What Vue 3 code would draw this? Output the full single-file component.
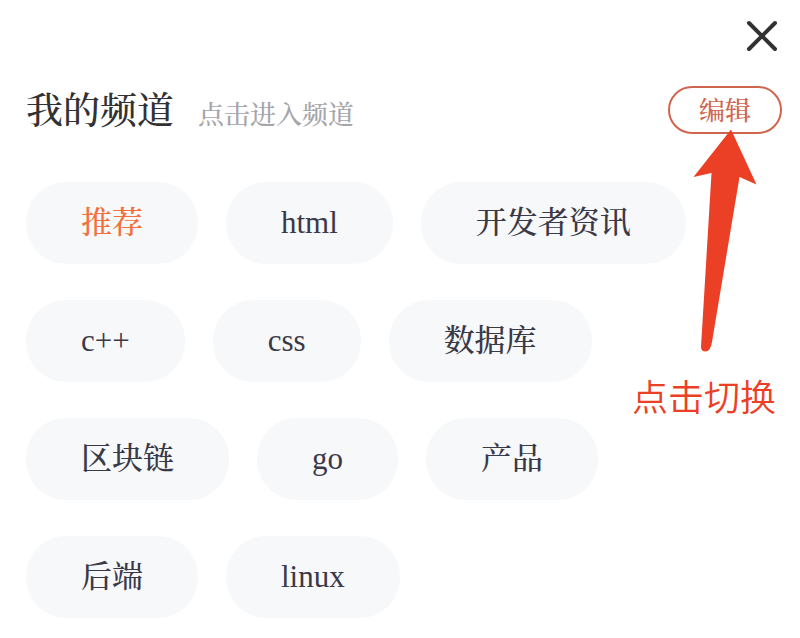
<script setup>
import { ref } from 'vue'

const channels = ['推荐', 'html', '开发者资讯', 'c++', 'css', '数据库', '区块链', 'go', '产品', '后端', 'linux']
const active = ref('推荐')
</script>

<template>
  <main class="panel">
    <div class="top">
      <button class="close" type="button" aria-label="关闭">
        <svg viewBox="0 0 32 32" width="32" height="32" aria-hidden="true">
          <path d="M3 3 29 29M29 3 3 29" fill="none" stroke="#323233" stroke-width="4" stroke-linecap="round" />
        </svg>
      </button>
    </div>

    <header class="heading">
      <h1 class="title">我的频道</h1>
      <p class="hint">点击进入频道</p>
      <div class="action">
        <button class="edit" type="button">编辑</button>
        <div class="callout">
          <svg class="arrow" viewBox="0 0 64 223" width="64" height="223" aria-hidden="true">
            <path d="M38 0.5 63.500 55.500 46.500 48 19 213Q17.500 222 13 222.500Q8 222.500 8 218L18.500 44 0.500 48Z" fill="#ec4026" />
          </svg>
          <p class="note">点击切换</p>
        </div>
      </div>
    </header>

    <nav class="channels" aria-label="我的频道">
      <button
        v-for="name in channels"
        :key="name"
        type="button"
        class="channel"
        :class="{ active: name === active }"
        @click="active = name"
      >{{ name }}</button>
    </nav>
  </main>
</template>

<style>
body {
  background: #fff;
}
</style>

<style scoped>
.panel {
  padding: 20px 18px 20px 26px;
  font-family: "Liberation Serif", "Noto Serif CJK SC", "Noto Sans CJK SC", serif;
  font-weight: 500;
}

button {
  margin: 0;
  border: 0;
  background: none;
  font-family: inherit;
  font-weight: inherit;
  cursor: pointer;
}

.top {
  display: flex;
  justify-content: flex-end;
  padding-right: 4px;
}

.close {
  display: flex;
  padding: 0;
}

.heading {
  display: flex;
  align-items: center;
  height: 48px;
  margin-top: 34px;
}

.title {
  margin: 0;
  padding-top: 4px;
  color: #323233;
  font-size: 37px;
  font-weight: 500;
  line-height: 48px;
}

.hint {
  margin: 0 0 0 24px;
  padding-top: 12px;
  color: #a5a5aa;
  font-size: 26px;
  line-height: 42px;
}

.action {
  position: relative;
  margin-left: auto;
}

.edit {
  display: block;
  height: 48px;
  padding: 2px 29px 0;
  border: 2px solid #d0654e;
  border-radius: 24px;
  color: #d0654e;
  font-size: 26px;
  line-height: 44px;
}

.callout {
  position: absolute;
  top: 43px;
  right: 6px;
  display: flex;
  flex-direction: column;
  gap: 19px;
  pointer-events: none;
}

.arrow {
  margin-left: 61px;
}

.note {
  margin: 0;
  color: #ec4026;
  font-family: "Noto Sans CJK SC", sans-serif;
  font-size: 36px;
  font-weight: 350;
  line-height: 48px;
  white-space: nowrap;
}

.channels {
  display: flex;
  flex-wrap: wrap;
  gap: 36px 28px;
  margin-top: 48px;
}

.channel {
  height: 82px;
  padding: 0 55px;
  border-radius: 40px;
  background: #f7f8fa;
  color: #3a3948;
  font-size: 31px;
  line-height: 82px;
}

.channel.active {
  color: #f2703d;
}
</style>
